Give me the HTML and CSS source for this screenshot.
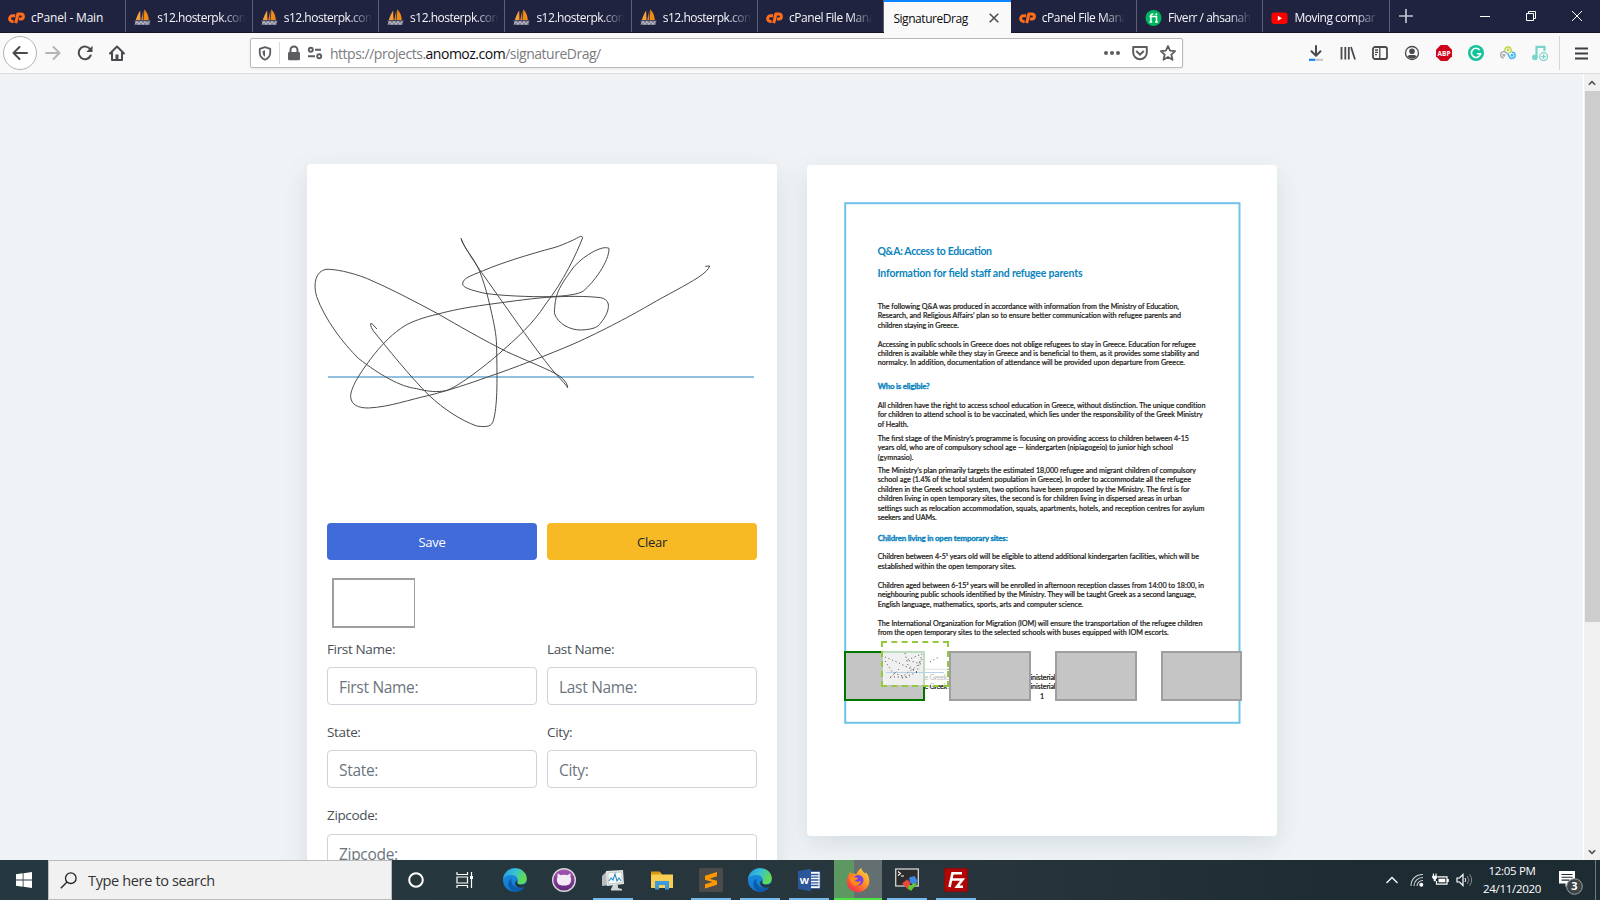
FILE: index.html
```html
<!DOCTYPE html>
<html lang="en">
<head>
<meta charset="utf-8">
<title>SignatureDrag</title>
<link rel="stylesheet" href="styles.css">
</head>
<body>
<svg class="defs" width="0" height="0">
  <defs>
    <linearGradient id="edgeA" x1="0" y1="0" x2="1" y2=".4"><stop offset="0" stop-color="#2394dd"/><stop offset=".5" stop-color="#35c1d8"/><stop offset="1" stop-color="#62dc50"/></linearGradient>
    <linearGradient id="edgeB" x1="0" y1="0" x2="0" y2="1"><stop offset="0" stop-color="#1c8fe0"/><stop offset="1" stop-color="#1277d4"/></linearGradient>
    <linearGradient id="fox" x1="1" y1="0" x2=".2" y2="1"><stop offset="0" stop-color="#ffe14a"/><stop offset=".45" stop-color="#ff9a1f"/><stop offset="1" stop-color="#f5264d"/></linearGradient>
    <linearGradient id="cat" x1="0" y1="0" x2="0" y2="1"><stop offset="0" stop-color="#a957b8"/><stop offset="1" stop-color="#5f2579"/></linearGradient>
  </defs>
  <symbol id="cp" viewBox="0 0 17 13"><g fill="none" stroke="#ff6c1a" stroke-width="3" stroke-linejoin="round"><path d="M7.200 4.200H4.600a2.900 2.900 0 0 0-.2 5.800h1.200"/><path d="M7.700 11.600 9.900 2.400h2.900a2.400 2.400 0 0 1 0 5.200H10.900"/></g></symbol>
  <symbol id="boat" viewBox="0 0 17 17"><path d="M6.200 1.500 6.500 11H1.800C3 7 4.500 4 6.200 1.500z" fill="#f5a13a"/><path d="M10.300.3C13 3 14.600 7 14.800 11H9.800z" fill="#f08a12"/><path d="M9.300 1.500V11H7.200z" fill="#d8823a"/><path d="M.5 11.500h16l-1 4.500H1.500z" fill="#77788a"/><path d="M1 15.500l2-3 2 3 2-3 2 3 2-3 2 3 2-3" fill="none" stroke="#d8d8e2" stroke-width=".8"/></symbol>
  <symbol id="edge" viewBox="0 0 24 24"><circle cx="11.800" cy="12" r="11.800" fill="url(#edgeB)"/><path d="M.2 11C1 4.500 6 .2 12 .2c7 0 11.800 5 11.800 10 0 4-3 6-6 6-2.500 0-4-1-3.500-2 .6-1 .7-1.500.5-3C14 8.500 11.500 7 8.500 7 4.500 7 1.500 8.500.2 11z" fill="url(#edgeA)"/><path d="M8.500 10.500c-1.500 6 4 10 9.500 9.200 2-.2 3.500-1 4-1.500C20 22 16 24 12.500 23.800 6.500 23 4 17 6 13c.7-1.300 1.500-2 2.500-2.500z" fill="#0d5cab"/><path d="M14.600 12.500c0 .8-.8 1.300-.3 2.400.6 1.300 2.500 2 4.600 1.700 1.800-.1 3-.8 3.700-1.400l1.300.8c-.5 1.500-1 2.200-1.900 2.800-1.500.9-3.300 1.300-5.500.9-2.700-.6-4.700-2.600-4.300-5 .3-1.400 1.500-2.200 2.400-2.200z" fill="#253840"/></symbol>
</svg>

<header class="tabs">
  <div class="tab"><svg class="fav" viewBox="0 0 17 13"><use href="#cp"/></svg><span class="tt">cPanel - Main</span></div>
  <div class="tab"><svg class="fav boat"><use href="#boat"/></svg><span class="tt">s12.hosterpk.com</span></div>
  <div class="tab"><svg class="fav boat"><use href="#boat"/></svg><span class="tt">s12.hosterpk.com</span></div>
  <div class="tab"><svg class="fav boat"><use href="#boat"/></svg><span class="tt">s12.hosterpk.com</span></div>
  <div class="tab"><svg class="fav boat"><use href="#boat"/></svg><span class="tt">s12.hosterpk.com</span></div>
  <div class="tab"><svg class="fav boat"><use href="#boat"/></svg><span class="tt">s12.hosterpk.com</span></div>
  <div class="tab"><svg class="fav" viewBox="0 0 17 13"><use href="#cp"/></svg><span class="tt">cPanel File Mana</span></div>
  <div class="tab active"><span class="tt">SignatureDrag</span><svg class="close" viewBox="0 0 10 10"><path d="M.7.7l8.600 8.600M9.300.7.7 9.300" stroke="#4a4a4f" stroke-width="1.500"/></svg></div>
  <div class="tab"><svg class="fav" viewBox="0 0 17 13"><use href="#cp"/></svg><span class="tt">cPanel File Mana</span></div>
  <div class="tab"><svg class="fav" viewBox="0 0 16 16"><circle cx="8" cy="8" r="8" fill="#00b560"/><path d="M4 6.500h7v5.500M5.400 12V5.800c0-1.500 1-1.900 2.400-1.800M4 12h2.800M9.600 12h2.800" fill="none" stroke="#fff" stroke-width="1.500"/><circle cx="10.800" cy="4.200" r="1" fill="#fff"/></svg><span class="tt">Fiverr / ahsanah</span></div>
  <div class="tab"><svg class="fav" viewBox="0 0 16 16"><rect y="2.500" width="16" height="11.500" rx="3" fill="#f00"/><path d="M6.300 5.700v5l4.200-2.500z" fill="#fff"/></svg><span class="tt">Moving compar</span></div>
  <svg class="plus" viewBox="0 0 14 14"><path d="M7 0v14M0 7h14" stroke="#c4c4d0" stroke-width="1.700"/></svg>
  <div class="winctl">
    <svg viewBox="0 0 10 10"><path d="M0 5.500h10" stroke="#fff"/></svg>
    <svg viewBox="0 0 10 10"><path d="M.5 2.500h7v7h-7zM2.500 2.500v-2h7v7h-2" fill="none" stroke="#fff"/></svg>
    <svg viewBox="0 0 10 10"><path d="M0 0l10 10M10 0 0 10" stroke="#fff"/></svg>
  </div>
</header>

<nav class="bar">
  <div class="back"><svg viewBox="0 0 16 16"><path d="M15 8H1.800M7.500 2 1.500 8l6 6" fill="none" stroke="#4a4a4f" stroke-width="2" stroke-linecap="round" stroke-linejoin="round"/></svg></div>
  <svg class="nv" viewBox="0 0 16 16"><path d="M1 8h13.200M8.500 2l6 6-6 6" fill="none" stroke="#b5b5b8" stroke-width="2" stroke-linecap="round" stroke-linejoin="round"/></svg>
  <svg class="nv" viewBox="0 0 16 16"><path d="M13.300 4.500A6.300 6.300 0 1 0 13.700 10.500" fill="none" stroke="#4a4a4f" stroke-width="2" stroke-linecap="round"/><path d="M15.500.8V7H9.300z" fill="#4a4a4f"/></svg>
  <svg class="nv" viewBox="0 0 16 16"><path d="M1 8.500 8 1.500l7 7M3 8v7h10V8" fill="none" stroke="#4a4a4f" stroke-width="2" stroke-linecap="round" stroke-linejoin="round"/><path d="M6.500 9.500h3V15h-3z" fill="#4a4a4f"/></svg>
  <div class="url">
    <svg class="shield" viewBox="0 0 14 16"><path d="M7 1.200 12.600 3v4c0 4-2.600 6.500-5.600 7.700C4 13.500 1.400 11 1.400 7V3z" fill="none" stroke="#5c5c61" stroke-width="1.900" stroke-linejoin="round"/><path d="M7 4.500v7C5.300 10.500 4.500 9 4.500 7V5.200z" fill="#5c5c61"/></svg>
    <i class="vsep"></i>
    <svg class="lock" viewBox="0 0 14 16"><path d="M3.500 8V5a3.500 3.500 0 0 1 7 0v3" fill="none" stroke="#5c5c61" stroke-width="2"/><rect x="1" y="7" width="12" height="8.200" rx="1.200" fill="#5c5c61"/></svg>
    <svg class="perm" viewBox="0 0 16 16"><g fill="none" stroke="#5c5c61" stroke-width="1.900"><circle cx="3.800" cy="4.800" r="2"/><path d="M8 4.800h6M1 11.300h7"/><circle cx="12.200" cy="11.300" r="2"/></g></svg>
    <span class="addr">https://projects.<b>anomoz.com</b>/signatureDrag/</span>
    <svg class="ic16" viewBox="0 0 16 16"><g fill="#5c5c61"><circle cx="2" cy="8" r="2"/><circle cx="8" cy="8" r="2"/><circle cx="14" cy="8" r="2"/></g></svg>
    <svg class="ic16" viewBox="0 0 16 16"><path d="M1.200 2h13.600v5.500a6.800 6.800 0 0 1-13.600 0z" fill="none" stroke="#5c5c61" stroke-width="2" stroke-linejoin="round"/><path d="M4.800 6.500 8 9.600l3.200-3.100" fill="none" stroke="#5c5c61" stroke-width="2" stroke-linecap="round"/></svg>
    <svg class="ic16" viewBox="0 0 16 16"><path d="M8 1l2.100 4.700 5 .5-3.800 3.400 1.200 5.200L8 12.100l-4.500 2.700 1.200-5.200L.9 6.200l5-.5z" fill="none" stroke="#5c5c61" stroke-width="1.800" stroke-linejoin="round"/></svg>
  </div>
  <div class="ext">
    <svg viewBox="0 0 16 16"><path d="M8 1v9.500M3.500 6.200 8 10.800l4.500-4.600" fill="none" stroke="#4a4a4f" stroke-width="2" stroke-linecap="round" stroke-linejoin="round"/><path d="M1 14.800h14" stroke="#c4c4c4" stroke-width="2"/><path d="M1 14.800h6" stroke="#0a84ff" stroke-width="2"/></svg>
    <svg viewBox="0 0 16 16"><path d="M1.500 2v12.500M5.300 2v12.500M8.800 2v12.500M11 2l4 12.500" fill="none" stroke="#4a4a4f" stroke-width="1.800"/></svg>
    <svg viewBox="0 0 16 16"><rect x="1" y="2" width="14" height="12" rx="2" fill="none" stroke="#4a4a4f" stroke-width="1.800"/><path d="M7.800 2v12M3 5h3M3 7.300h3M3 9.600h2" stroke="#4a4a4f" stroke-width="1.300"/></svg>
    <svg viewBox="0 0 16 16"><circle cx="8" cy="8" r="6.500" fill="none" stroke="#4a4a4f" stroke-width="1.300"/><circle cx="8" cy="6.300" r="2.800" fill="#4a4a4f"/><path d="M3.400 11.500c1.300-1.800 2.500-1.500 4.600-1.500s3.300-.3 4.600 1.500C11.500 13 10 13.500 8 13.500S4.500 13 3.400 11.500z" fill="#4a4a4f"/></svg>
    <svg viewBox="0 0 16 16"><path d="M4.700 0h6.600L16 4.700v6.600L11.300 16H4.700L0 11.300V4.700z" fill="#d0021b"/><text x="8" y="10.700" text-anchor="middle" class="abp">ABP</text></svg>
    <svg viewBox="0 0 16 16"><circle cx="8" cy="8" r="8" fill="#15c39a"/><path d="M11.600 5A4.600 4.600 0 1 0 12.500 8.800H9" fill="none" stroke="#fff" stroke-width="1.600"/></svg>
    <svg viewBox="0 0 16 16"><g fill="none" stroke-width="1.500"><path d="M3.600 13.200A3.300 3.300 0 1 1 7 8.600" stroke="#a9a9b0"/><circle cx="3.900" cy="10.300" r=".8" stroke="#a9a9b0"/><path d="M4.800 5.800a3.300 3.300 0 1 1 6 1.200l-1.800.8" stroke="#c3d94a"/><circle cx="8" cy="4.800" r=".8" stroke="#c3d94a"/><path d="M7.500 8.200l1.600 3a3.100 3.100 0 1 0 2.700-4" stroke="#3eb5f0"/><circle cx="12" cy="10.300" r=".8" stroke="#3eb5f0"/></g></svg>
    <svg viewBox="0 0 16 16"><path d="M4.500 12V1.800h8V6" fill="none" stroke="#77d5c9" stroke-width="2.200"/><circle cx="2.900" cy="12.300" r="2.900" fill="#77d5c9"/><circle cx="11.600" cy="11.600" r="3.900" fill="#f9f9fa" stroke="#77d5c9" stroke-width="1.200"/><path d="M11.600 9.300v4.600M9.300 11.600h4.600" stroke="#77d5c9" stroke-width="1.200"/></svg>
  </div>
  <i class="barsep"></i>
  <svg class="burger" viewBox="0 0 13 13"><path d="M0 1.500h13M0 6.500h13M0 11.500h13" stroke="#3f3f44" stroke-width="1.900"/></svg>
</nav>

<main class="view">
  <div class="page">
    <section class="card form">
      <svg class="sign" viewBox="21 42 1410 1077">
        <path d="M84 681H1362" stroke="#6eadd4" stroke-width="5"/>
        <path class="ink" d="M231 537L214 519Q208 522 218 540C260 592 330 680 388 737C430 776 480 810 530 828C560 832 575 830 580 812C592 770 592 700 590 600C590 560 585 535 575 490C562 430 545 370 528 342C510 310 490 290 483 265C492 292 530 345 545 368C590 430 720 620 770 675Q795 700 803 713C803 698 785 680 765 670C730 652 680 632 620 605C550 570 480 530 415 492C340 452 270 415 200 385C150 366 105 357 78 358C48 363 38 400 50 440C75 510 130 580 175 625C240 675 300 710 350 716C385 725 410 727 438 722C470 712 540 660 595 613C650 565 700 520 735 465C790 395 830 310 848 263C846 254 836 262 820 270C795 281 780 288 762 293C690 312 600 340 550 362C510 378 488 385 488 402C488 412 510 420 555 430C600 437 690 441 750 440C800 438 835 433 850 423C880 398 928 335 927 295C915 290 900 295 880 305C860 316 840 330 822 350C795 387 770 420 766 455Q762 485 764 492C775 522 810 540 842 540C880 539 895 530 901 520C918 500 927 480 925 462C922 450 912 445 902 443C860 438 800 438 740 442C680 447 620 456 560 464C500 472 450 482 415 492C370 502 335 515 315 527C280 548 250 580 225 610C190 655 150 710 152 742C155 765 175 774 205 774C270 771 330 748 388 736C450 720 510 700 560 682C640 655 750 612 820 582C910 542 1000 493 1050 464C1100 435 1160 405 1195 382Q1225 362 1229 348L1216 349"/>
      </svg>
      <div class="body">
        <div class="row"><button class="btn save">Save</button><button class="btn clear">Clear</button></div>
        <div class="thumb"></div>
        <div class="row fields">
          <label>First Name:<input placeholder="First Name:"></label>
          <label>Last Name:<input placeholder="Last Name:"></label>
        </div>
        <div class="row fields">
          <label>State:<input placeholder="State:"></label>
          <label>City:<input placeholder="City:"></label>
        </div>
        <div class="row fields zip"><label>Zipcode:<input placeholder="Zipcode:"></label></div>
      </div>
    </section>

    <section class="card preview">
      <div class="sheet">
        <svg class="doc" viewBox="844 202 397 522">
          <rect x="845.200" y="203.200" width="394.300" height="519.600" fill="#fff" stroke="#6fc3e8" stroke-width="2"/>
          <g class="h1">
            <text x="877.500" y="254.800" textLength="114.500">Q&amp;A: Access to Education</text>
            <text x="877.500" y="277" textLength="205">Information for field staff and refugee parents</text>
          </g>
          <g class="h2">
            <text x="877.700" y="389" textLength="52">Who is eligible?</text>
            <text x="877.700" y="540.500" textLength="130">Children living in open temporary sites:</text>
          </g>
          <g class="p">
            <text x="877.700" y="308.700" textLength="301.300">The following Q&amp;A was produced in accordance with information from the Ministry of Education,</text>
            <text x="877.700" y="318" textLength="303.300">Research, and Religious Affairs’ plan so to ensure better communication with refugee parents and</text>
            <text x="877.700" y="327.500" textLength="81.300">children staying in Greece.</text>
            <text x="877.700" y="346.500" textLength="318">Accessing in public schools in Greece does not oblige refugees to stay in Greece. Education for refugee</text>
            <text x="877.700" y="355.800" textLength="321.300">children is available while they stay in Greece and is beneficial to them, as it provides some stability and</text>
            <text x="877.700" y="365" textLength="307.300">normalcy. In addition, documentation of attendance will be provided upon departure from Greece.</text>
            <text x="877.700" y="407.700" textLength="327.700">All children have the right to access school education in Greece, without distinction. The unique condition</text>
            <text x="877.700" y="417.300" textLength="325">for children to attend school is to be vaccinated, which lies under the responsibility of the Greek Ministry</text>
            <text x="877.700" y="426.700" textLength="30.700">of Health.</text>
            <text x="877.700" y="441" textLength="311.300">The first stage of the Ministry’s programme is focusing on providing access to children between 4-15</text>
            <text x="877.700" y="450.300" textLength="295.300">years old, who are of compulsory school age — kindergarten (nipiagogeio) to junior high school</text>
            <text x="877.700" y="459.700" textLength="35.700">(gymnasio).</text>
            <text x="877.700" y="473" textLength="318.300">The Ministry’s plan primarily targets the estimated 18,000 refugee and migrant children of compulsory</text>
            <text x="877.700" y="482.300" textLength="313.300">school age (1.4% of the total student population in Greece). In order to accommodate all the refugee</text>
            <text x="877.700" y="491.700" textLength="312">children in the Greek school system, two options have been proposed by the Ministry. The first is for</text>
            <text x="877.700" y="501.300" textLength="304">children living in open temporary sites, the second is for children living in dispersed areas in urban</text>
            <text x="877.700" y="510.600" textLength="326.700">settings such as relocation accommodation, squats, apartments, hotels, and reception centres for asylum</text>
            <text x="877.700" y="520" textLength="59">seekers and UAMs.</text>
            <text x="877.700" y="559.300" textLength="321.300">Children between 4-5¹ years old will be eligible to attend additional kindergarten facilities, which will be</text>
            <text x="877.700" y="569" textLength="138.300">established within the open temporary sites.</text>
            <text x="877.700" y="588" textLength="326.300">Children aged between 6-15² years will be enrolled in afternoon reception classes from 14:00 to 18:00, in</text>
            <text x="877.700" y="597.300" textLength="318.300">neighbouring public schools identified by the Ministry. They will be taught Greek as a second language,</text>
            <text x="877.700" y="606.700" textLength="205.700">English language, mathematics, sports, arts and computer science.</text>
            <text x="877.700" y="625.600" textLength="324.700">The International Organization for Migration (IOM) will ensure the transportation of the refugee children</text>
            <text x="877.700" y="635" textLength="291">from the open temporary sites to the selected schools with buses equipped with IOM escorts.</text>
            <text x="924.500" y="680.200" textLength="27">e Greek s</text>
            <text x="1030.500" y="680.200" textLength="25">inisterial</text>
            <text x="924.500" y="688.800" textLength="27">e Greek s</text>
            <text x="1030.500" y="688.800" textLength="25">inisterial</text>
            <text x="1040" y="699">1</text>
          </g>
          <path d="M877.500 669.300h72" stroke="#8a8a80" stroke-width="1"/>
        </svg>
        <div class="slots"><i class="slot first"></i><i class="slot"></i><i class="slot"></i><i class="slot last"></i></div>
        <div class="drag"><svg width="64" height="42" viewBox="0 0 64 42"><path d="M3 29.500h58" stroke="#b6d0e6"/><g transform="translate(0 9)" fill="none" stroke="#555" stroke-width=".9" stroke-dasharray="1.200 2.600"><path d="M7 26l10-10M2 5 16 11 34 20l5-18L24 8l14 4M2 9l8 12 10 3 14-10 6-8M22 1l3 12 11 9M7 25h14l6-2 8-3M19 26l8-1M47 10l9-5"/></g></svg></div>
      </div>
    </section>
  </div>
  <aside class="scroll">
    <svg viewBox="0 0 10 6"><path d="M1 5.200 5 1.200l4 4" fill="none" stroke="#505050" stroke-width="2"/></svg>
    <i class="thumbbar"></i>
    <svg class="dn" viewBox="0 0 10 6"><path d="M1 .8l4 4 4-4" fill="none" stroke="#505050" stroke-width="2"/></svg>
  </aside>
</main>

<footer class="task">
  <div class="start"><svg viewBox="0 0 16 16" width="16" height="16"><path d="M0 2.300l6.700-1v6.200H0zM7.500 1.200 16 0v7.500H7.500zM0 8.400h6.700v6.300L0 13.700zM7.500 8.400H16V16l-8.500-1.200z" fill="#fff"/></svg></div>
  <div class="search"><svg viewBox="0 0 17 17"><circle cx="10.800" cy="6.200" r="5.300" fill="none" stroke="#222" stroke-width="1.300"/><path d="M7 10 .8 16.200" stroke="#222" stroke-width="1.300"/></svg><span>Type here to search</span></div>
  <div class="apps">
    <div class="app"><svg viewBox="0 0 24 24"><circle cx="12" cy="12" r="6.800" fill="none" stroke="#fff" stroke-width="2"/></svg></div>
    <div class="app"><svg viewBox="0 0 24 24"><g fill="none" stroke="#fff" stroke-width="1.200"><path d="M4 4v2.500h10.500V4M4 20v-2.500h10.500V20M4 9h10.500v6H4zM18.500 4v16"/></g><path d="M17 8h3v3h-3z" fill="#fff"/></svg></div>
    <div class="app edge"><svg viewBox="0 0 24 24"><use href="#edge"/></svg></div>
    <div class="app"><svg viewBox="0 0 24 24"><circle cx="12" cy="12" r="11.300" fill="url(#cat)" stroke="#d9d9d9" stroke-width="1.400"/><path d="M5.800 5.500 9 7.200c2-.5 4-.5 6 0l3.200-1.700c.6 1.500.5 2.500.2 3.500 1.200 2 .8 4.500-.4 6.500-1.500 2.700-10.500 2.700-12 0-1.200-2-1.600-4.500-.4-6.500-.3-1-.4-2 .2-3.500z" fill="#f3eaf5"/></svg></div>
    <div class="app run"><svg viewBox="0 0 24 24"><path d="M1 8l5-5 3 1v13l-8 1z" fill="#b9bcbc"/><path d="M5 3l17-1 1 14-17 2z" fill="#e4e6e5"/><path d="M7 5l13.500-1 .8 10.500L7.500 16z" fill="#fafcfc" stroke="#9aa" stroke-width=".5"/><path d="M8 13l2-3 2 2 2-6 2 7 2-3 2 3" fill="none" stroke="#2d8ac8" stroke-width="1.100"/><path d="M12 17h5v3l4 1v1.500H10V21z" fill="#d2d5d4"/></svg></div>
    <div class="app"><svg viewBox="0 0 24 24"><path d="M1 4h9l2 2.500h11V20H1z" fill="#f8ce55"/><path d="M1 3.500h8.500l1.500 3H1z" fill="#d9980d"/><path d="M5 21.500v-8.500h14v8.500h-4V17H9v4.500z" fill="#3d9bdc"/></svg></div>
    <div class="app run"><svg viewBox="0 0 24 24"><rect width="24" height="24" rx="2" fill="#4b4b4b"/><path d="M6 7.800 18 4v4.300L10.500 10.700 18 12.800v4L6 20.500v-4.200l7.500-2.400L6 11.800z" fill="#ff9800"/></svg></div>
    <div class="app run"><svg viewBox="0 0 24 24"><use href="#edge"/></svg></div>
    <div class="app run"><svg viewBox="0 0 24 24"><path d="M12 3.500h11v17H12z" fill="#fff" stroke="#2b579a" stroke-width=".8"/><path d="M14 6.500h7.500M14 9.200h7.500M14 12h7.500M14 14.800h7.500M14 17.500h7.500" stroke="#2b579a" stroke-width="1.300"/><path d="M1 3 14 .8v22.400L1 21z" fill="#2b579a"/><text x="7.300" y="15.700" text-anchor="middle" class="word">W</text></svg></div>
    <div class="app fox"><svg viewBox="0 0 24 24"><path d="M12 24C5 24 .8 19 .8 13.300.8 9 3 6 4.500 3.200c.3 1.200.5 2 1.200 2.700 1.800-.8 3 0 4.600.3C11.500 3.500 13.500 1 15.500 0c.3 3 2 4 4 5.700.3-.5.3-1.200 0-1.700C22 6 23.300 9.500 23.300 13c0 6-4.700 11-11.300 11z" fill="url(#fox)"/><circle cx="12.200" cy="12.200" r="5.300" fill="#7543e3"/><path d="M3.500 9c2-1.800 4-1 5.500.3 1.500.2 3 .5 3 1.400-1 1-2.500 1-3 2.300 1.500 1.500 4.500.5 6 0-.8 3.500-4 5-7 4.200C5 16 3.500 12.500 3.500 9z" fill="#ff8a16"/></svg></div>
    <div class="app run"><svg viewBox="0 0 24 24"><rect x=".7" y="1" width="22.600" height="17" fill="#2c2c2c" stroke="#d5d5d5" stroke-width="1.300"/><path d="M3 3.500l2.500 2L3 7.500M6 8h3" fill="none" stroke="#fff" stroke-width="1.100"/><path d="M7 15.500l5-4 3.500 3-2 7.500z" fill="#e8493c"/><path d="M14 9.500l5.500-1.500 3.500 5.500-5.500 3.500-2.500-3z" fill="#3f86e8"/><path d="M13.500 17l2.500 1 2-2.500 4.500-.5-6.500 8-3-2.500z" fill="#5ccc2f"/></svg></div>
    <div class="app run"><svg viewBox="0 0 24 24"><rect x=".5" y=".5" width="23" height="23" fill="#b00606" stroke="#8d0909" stroke-dasharray="2 1"/><path d="M5.500 19 8.500 5.200H18M7.500 11.500h6M12.500 11.500h6L13 18.700h6" fill="none" stroke="#fff" stroke-width="2.600"/></svg></div>
  </div>
  <div class="tray">
    <svg class="chev" viewBox="0 0 12 8"><path d="M.5 7 6 1.500 11.500 7" fill="none" stroke="#fff" stroke-width="1.300"/></svg>
    <svg class="t1" viewBox="0 0 14 14"><g fill="none" stroke="#cfd4d6" stroke-width="1.100"><path d="M1 13C1 6 6 1.500 13 1.500M4 13c0-5 4-8.500 9-8.500M7 13c0-3 2.500-5.500 6-5.500"/></g><circle cx="11.300" cy="11.700" r="2" fill="#fff"/></svg>
    <svg class="t2" viewBox="0 0 17 14"><path d="M5.500 3.800h9.500v7.400H4.500V8M16.200 6v3" fill="none" stroke="#fff" stroke-width="1.200"/><path d="M6.500 5.700h6.800v3.600H6.500z" fill="#fff"/><path d="M1.400.5v2.500M4 .5v2.500" fill="none" stroke="#fff" stroke-width="1.100"/><path d="M.2 2.700h5v2.300L3.800 6.300v2H1.700v-2L.2 5z" fill="#fff"/></svg>
    <svg class="t3" viewBox="0 0 17 14"><path d="M1 5h2.500L7 1.500v11L3.500 9H1z" fill="none" stroke="#fff" stroke-width="1.200"/><path d="M9 5q1.500 2 0 4" fill="none" stroke="#fff"/><path d="M11.300 3q3 4 0 8M13.600 1.200q4 5.800 0 11.600" fill="none" stroke="#7f8a8e"/></svg>
    <div class="clock"><span>12:05 PM</span><span>24/11/2020</span></div>
    <svg class="note" viewBox="0 0 25 26"><path d="M1 1h16v12.500h-6.500L7.500 17v-3.500H1z" fill="#fff"/><path d="M3.500 4.500h11M3.500 7.300h11M3.500 10.100h8" stroke="#1d2b33" stroke-width="1.100"/><circle cx="16.500" cy="16.500" r="7.800" fill="#3d4448" stroke="#9a9fa2"/><text x="16.500" y="20.400" text-anchor="middle" class="cnt">3</text></svg>
    <i class="peek"></i>
  </div>
</footer>
</body>
</html>
```
FILE: styles.css
```css
* { box-sizing: border-box; }
html, body { margin: 0; height: 100%; overflow: hidden; }
body { display: flex; flex-direction: column; width: 1600px; height: 900px; font-family: "Open Sans", "Noto Sans", sans-serif; }
.defs { position: absolute; }
svg { flex: none; display: block; }

.tabs { display: flex; height: 33px; flex: none; background: #202340; border-bottom: 1px solid #14162c; }
.tab { width: 126.350px; flex: none; display: flex; align-items: center; padding: 3px 7px 0 8px; border-right: 1px solid #5d5f74; color: #f5f5fa; font-size: 12px; letter-spacing: -.48px; white-space: nowrap; }
.fav { width: 17px; height: 16px; margin-right: 6px; }
.boat { height: 17px; margin-top: -1px; }
.tt { flex: 1; -webkit-mask-image: linear-gradient(90deg, #000 70%, transparent 96%); mask-image: linear-gradient(90deg, #000 70%, transparent 96%); }
.tab:first-child .tt { -webkit-mask-image: none; mask-image: none; letter-spacing: -.2px; }
.tab.active { background: #f9f9fa; color: #0c0c0d; border: 0; border-top: 2px solid #0a84ff; height: 33px; padding-top: 1px; padding-left: 9px; padding-right: 12px; letter-spacing: -.45px; }
.active .tt { -webkit-mask-image: none; mask-image: none; }
.close { width: 10px; height: 10px; }
.plus { width: 14px; height: 14px; margin: 9px 0 0 9px; }
.winctl { margin-left: auto; display: flex; gap: 36px; padding: 11px 18px 0 0; }
.winctl svg { width: 10px; height: 10px; }

.bar { display: flex; align-items: center; flex: none; height: 41px; background: #f9f9fa; border-bottom: 1px solid #dcdce0; padding-left: 3px; }
.back { width: 34px; height: 34px; border: 1px solid #b3b3b6; border-radius: 50%; background: #fff; display: grid; place-items: center; }
.back svg, .nv { width: 16px; height: 16px; }
.nv { margin-left: 16px; }
.back + .nv { margin-left: 8px; }
.url { margin-left: 125px; width: 933px; height: 30px; flex: none; display: flex; align-items: center; background: #fff; border: 1px solid #b9b9bc; border-radius: 2px; box-shadow: 0 1px 3px rgba(0,0,0,.08); padding: 0 6px 0 7px; }
.shield { width: 14px; height: 15px; }
.vsep { width: 1px; height: 22px; background: #d9d9dc; margin: 0 7px; }
.lock { width: 14px; height: 16px; }
.perm { width: 16px; height: 16px; margin: 0 7px 0 6px; }
.addr { flex: 1; font-size: 14px; color: #7c7c80; letter-spacing: -.49px; }
.addr b { font-weight: 400; color: #0c0c0d; }
.ic16 { width: 16px; height: 16px; margin-left: 12px; }
.ext { display: flex; gap: 16px; margin-left: 125px; }
.ext svg { width: 16px; height: 16px; }
.abp { font: bold 6.500px "Open Sans", sans-serif; fill: #fff; }
.barsep { width: 1px; height: 34px; background: #d7d7da; margin: 0 15px 0 11px; }
.burger { width: 13px; height: 13px; }

.view { flex: 1; min-height: 0; display: flex; background: #eff3f6; }
.page { flex: 1; display: flex; align-items: flex-start; gap: 30px; padding: 90px 0 0 307px; overflow: hidden; }
.card { width: 470px; flex: none; background: #fff; border-radius: 4px; box-shadow: 0 8px 24px rgba(90,110,130,.16); }
.form { height: 760px; }
.sign { width: 470px; height: 359px; }
.ink { fill: none; stroke: #444; stroke-width: 2.900; stroke-linejoin: round; }
.body { padding: 0 20px; }
.row { display: flex; gap: 10px; }
.btn { flex: 1; height: 37px; border: 0; border-radius: 4px; font: 13px "Open Sans", sans-serif; letter-spacing: -.25px; padding-top: 1px; }
.save { background: #416bd8; color: #fff; }
.clear { background: #f7b924; color: #212529; }
.thumb { width: 83px; height: 50px; border: 2px solid #9f9f9f; border-right-width: 1px; margin: 18px 0 10px 5px; }
.fields { height: 83px; }
.fields label { flex: 1; display: block; padding-top: 1px; font-size: 13.500px; line-height: 21px; color: #495057; letter-spacing: -.35px; }
.fields input { display: block; width: 100%; height: 38px; margin-top: 7px; border: 1px solid #ced4da; border-radius: 4px; padding: 1px 11px 0; font: 15.500px "Open Sans", sans-serif; letter-spacing: -.3px; }
.fields input::placeholder { color: #6c757d; opacity: 1; }
.zip input { margin-top: 8px; }

.preview { height: 671px; margin-top: 1px; padding: 37px 0 0 37px; }
.sheet { position: relative; width: 397px; height: 522px; }
.doc { width: 397px; height: 522px; font-family: Lato, "Open Sans", sans-serif; }
.h1 { font-size: 10.500px; font-weight: 700; fill: #0a84bd; }
.h2 { font-size: 7.900px; font-weight: 700; fill: #0a84bd; stroke: #0a84bd; stroke-width: .35; }
.p { font-size: 7.200px; fill: #222018; stroke: #222018; stroke-width: .22; }
.slots { position: absolute; left: 0; top: 449px; width: 398px; display: flex; gap: 24px; }
.slot { width: 82px; height: 50px; flex: none; background: #c5c5c5; border: 2px solid #9f9f9f; }
.slot.first { width: 81px; border-color: #007800; }
.slot.last { width: 81px; }
.drag { position: absolute; left: 37px; top: 439px; width: 68px; height: 46px; border: 2px dashed #94c83d; background: rgba(255,255,255,.74); background-clip: padding-box; }

.scroll { width: 17px; flex: none; background: #f0f0f0; border-left: 1px solid #fff; display: flex; flex-direction: column; align-items: center; padding: 6px 0 5px; }
.scroll svg { width: 8px; height: 6px; }
.thumbbar { width: 15px; height: 531px; background: #cdcdcd; margin-top: 5px; }
.dn { margin-top: auto; }

.task { height: 40px; flex: none; display: flex; background: linear-gradient(90deg, #253840, #28353c 60%, #1d2b33 85%); }
.start { width: 48px; display: grid; place-items: center; }
.search { width: 344px; display: flex; align-items: center; gap: 11px; background: #f1f1f1; border: 1px solid #bcbcbc; padding-left: 11px; font-size: 14.500px; color: #333; letter-spacing: -.35px; }
.search svg { width: 17px; height: 17px; }
.apps { display: flex; gap: 1px; }
.app { width: 48px; height: 40px; display: grid; place-items: center; }
.app.edge { margin-left: 1px; }
.app svg { width: 24px; height: 24px; }
.run { background: linear-gradient(#76b9ed, #76b9ed) center bottom / 40px 2px no-repeat; }
.fox { background: linear-gradient(#4be33f, #4be33f) bottom / 100% 2px no-repeat, linear-gradient(90deg, #5d9863 20px, #646f72 20px); }
.word { font: bold 9.500px "Open Sans", sans-serif; fill: #fff; }
.tray { margin-left: auto; display: flex; align-items: center; }
.chev { width: 12px; height: 8px; margin-right: 12px; }
.t1 { width: 14px; height: 14px; margin-right: 8px; }
.t2 { width: 17px; height: 14px; margin-right: 7px; }
.t3 { width: 17px; height: 14px; }
.clock { width: 78px; display: flex; flex-direction: column; align-items: center; color: #fff; font-size: 11.500px; line-height: 18px; letter-spacing: -.3px; }
.note { width: 25px; height: 26px; margin: 5px 0 0 7px; }
.cnt { font: bold 11px "Open Sans", sans-serif; fill: #fff; }
.peek { width: 1px; height: 40px; background: #6f797e; margin: 0 4px 0 12px; }
```
